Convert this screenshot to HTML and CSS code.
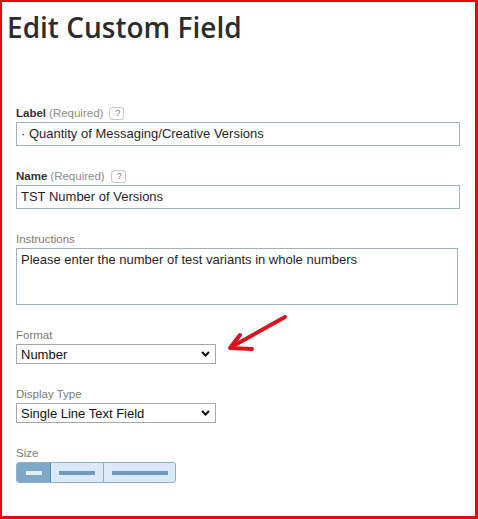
FILE: index.html
```html
<!DOCTYPE html>
<html>
<head>
<meta charset="utf-8">
<link rel="stylesheet" href="styles.css">
</head>
<body>
<div class="frame">
  <h1 class="title">Edit Custom Field</h1>
  <form class="form">
    <div class="field">
      <div class="label"><b>Label</b><span class="req">(Required)</span><span class="help">?</span></div>
      <div class="input">· Quantity of Messaging/Creative Versions</div>
    </div>
    <div class="field">
      <div class="label"><b>Name</b><span class="req">(Required)</span><span class="help">?</span></div>
      <div class="input">TST Number of Versions</div>
    </div>
    <div class="field">
      <div class="label">Instructions</div>
      <div class="textarea">Please enter the number of test variants in whole numbers</div>
    </div>
    <div class="field">
      <div class="label">Format</div>
      <div class="select"><span>Number</span><svg class="chev" width="9" height="6" viewBox="0 0 9 6"><path d="M1 1 L4.5 4.5 L8 1" fill="none" stroke="#111" stroke-width="2"/></svg></div>
    </div>
    <div class="field">
      <div class="label">Display Type</div>
      <div class="select"><span>Single Line Text Field</span><svg class="chev" width="9" height="6" viewBox="0 0 9 6"><path d="M1 1 L4.5 4.5 L8 1" fill="none" stroke="#111" stroke-width="2"/></svg></div>
    </div>
    <div class="field">
      <div class="label">Size</div>
      <div class="sizes">
        <div class="seg seg-s active"><span class="bar"></span></div>
        <div class="seg seg-m"><span class="bar"></span></div>
        <div class="seg seg-l"><span class="bar"></span></div>
      </div>
    </div>
  </form>
  <svg class="annot" width="80" height="50" viewBox="0 0 80 50">
    <path d="M58 4 L6 33" fill="none" stroke="#d8141c" stroke-width="4" stroke-linecap="round"/>
    <path d="M13 22 L3 35 L25 36" fill="none" stroke="#d8141c" stroke-width="4" stroke-linecap="round" stroke-linejoin="round"/>
  </svg>
</div>
</body>
</html>
```
FILE: styles.css
```css
html, body {
  margin: 0;
  padding: 0;
  background: #fff;
}
.frame {
  position: relative;
  width: 478px;
  height: 519px;
  box-sizing: border-box;
  border: solid #e4080f;
  border-width: 2px 3px 3px 2px;
  padding: 9px 0 0 0;
  font-family: "Liberation Sans", Arial, sans-serif;
}
.title {
  margin: 0 0 0 5px;
  font-family: "Open Sans", sans-serif;
  font-weight: 600;
  font-size: 28px;
  line-height: 32px;
  color: #2c2c2c;
  letter-spacing: 0;
}
.form {
  margin: 63px 0 0 14px;
  display: flex;
  flex-direction: column;
  gap: 23px;
}
.field {
  display: flex;
  flex-direction: column;
  gap: 2px;
}
.label {
  font-size: 11.5px;
  line-height: 14px;
  color: #7a7a7a;
  display: flex;
  align-items: center;
}
.label b {
  color: #333;
  font-weight: bold;
}
.req {
  margin-left: 3px;
  color: #8c8c8c;
}
.help {
  position: relative;
  margin-left: 9px;
  width: 11px;
  height: 11px;
  border: 1px solid #c9c9c9;
  border-left: none;
  border-radius: 0 3px 3px 0;
  font-size: 9px;
  line-height: 11px;
  text-align: center;
  color: #777;
}
.help::before {
  content: "";
  position: absolute;
  left: -3px;
  top: 0;
  width: 3px;
  height: 11px;
  border-left: 1px solid #c9c9c9;
  border-top: 1px solid #c9c9c9;
  border-bottom: 1px solid #c9c9c9;
  border-radius: 4px 0 0 4px;
  top: -1px;
}
.input {
  width: 444px;
  height: 24px;
  box-sizing: border-box;
  border: 1px solid #a3b0ba;
  padding: 0 4px;
  font-size: 13px;
  line-height: 22px;
  color: #1f1f1f;
}
.textarea {
  width: 442px;
  height: 57px;
  box-sizing: border-box;
  border: 1px solid #a3b0ba;
  padding: 3px 4px;
  font-size: 13px;
  line-height: 16px;
  color: #1f1f1f;
}
.select {
  width: 200px;
  height: 20px;
  box-sizing: border-box;
  border: 1px solid #a7a7a7;
  padding: 0 5px 0 4px;
  display: flex;
  align-items: center;
  justify-content: space-between;
  font-size: 13px;
  color: #111;
}
.chev {
  display: block;
}
.sizes {
  display: flex;
  width: 160px;
  height: 21px;
  box-sizing: border-box;
  border: 1px solid #8fb0c8;
  border-radius: 3px;
  overflow: hidden;
  background: #dbeaf6;
}
.seg {
  display: flex;
  align-items: center;
  justify-content: center;
  border-left: 1px solid #8fb0c8;
}
.seg:first-child {
  border-left: none;
}
.seg-s { width: 33px; }
.seg-m { width: 52px; }
.seg-l { flex: 1; }
.seg.active {
  background: #7ea8c7;
  border-right: 1px solid #5f89aa;
}
.seg.active + .seg {
  border-left: none;
}
.bar {
  display: block;
  height: 4px;
  background: #6d99bb;
}
.seg-s .bar { width: 16px; background: #e3f0fa; }
.seg-m .bar { width: 36px; }
.seg-l .bar { width: 56px; }
.annot {
  position: absolute;
  left: 225px;
  top: 311px;
}
```
